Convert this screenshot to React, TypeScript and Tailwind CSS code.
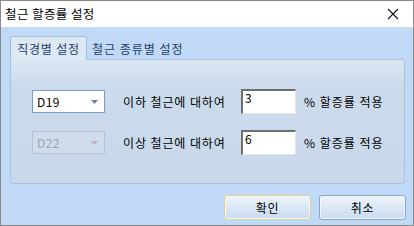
import React from "react";

const font = { fontFamily: '"Noto Sans CJK KR", "Noto Sans", sans-serif' };

function Caret({ color }: { color: string }) {
  return (
    <svg width="7" height="4" viewBox="0 0 7 4">
      <polygon points="0,0 7,0 3.5,4" fill={color} />
    </svg>
  );
}

export default function App() {
  return (
    <div
      className="w-[414px] h-[226px] flex flex-col border border-[#8a8a8a] bg-[#bfd9f6] text-[12px] text-black overflow-hidden"
      style={font}
    >
      <div className="h-[26px] bg-white flex items-center justify-between pl-[4px] pr-[14px] shrink-0">
        <span className="text-[12.5px] leading-none tracking-[0.4px]">철근 할증률 설정</span>
        <svg width="12" height="12" viewBox="0 0 12 12">
          <path d="M1 1 L11 11 M11 1 L1 11" stroke="#111" strokeWidth="1.1" />
        </svg>
      </div>
      <div className="flex-1 flex flex-col px-[9px] pt-[9px]">
        <div className="flex items-end h-[23px]">
          <div className="relative z-10 h-[24px] w-[77px] -mb-[1px] rounded-t-[3px] border border-b-0 border-[#a5bed8] bg-[#dde8f5] flex items-center justify-center text-[#1f3f66] tracking-[0.8px]">
            직경별 설정
          </div>
          <div className="h-[20px] pl-[5px] flex items-center text-[#1f3f66] tracking-[1px]">철근 종류별 설정</div>
        </div>
        <div className="h-[125px] w-[395px] rounded-[3px] border border-[#a9c1dc] bg-gradient-to-b from-[#dbe6f3] via-[#ccdbec] via-[20%] to-[#c8d8ea] flex flex-col pl-[21px] pt-[29px] gap-[16px]">
          <div className="flex items-center h-[25px]">
            <div className="w-[73px] h-[23px] bg-white border border-[#7a9cc8] flex items-center justify-between pl-[4px] pr-[6px]">
              <span className="tracking-[0.4px]">D19</span>
              <Caret color="#6a7fa3" />
            </div>
            <span className="ml-[18px] w-[118px] tracking-[0.9px]">이하 철근에 대하여</span>
            <div className="w-[55px] h-[25px] bg-white border border-[#e6e6e6] border-t-[#6f6f6f] border-l-[#6f6f6f] border-t-2 border-l-2 pl-[2px] leading-[14px]">
              3
            </div>
            <span className="ml-[8px] tracking-[1px]">% 할증률 적용</span>
          </div>
          <div className="flex items-center h-[25px]">
            <div className="w-[73px] h-[23px] bg-[#cfdcec] border border-[#b4c3d4] flex items-center justify-between pl-[4px] pr-[6px] text-[#9aa5b1]">
              <span className="tracking-[0.4px]">D22</span>
              <Caret color="#c8a9c2" />
            </div>
            <span className="ml-[18px] w-[118px] tracking-[0.9px]">이상 철근에 대하여</span>
            <div className="w-[55px] h-[25px] bg-white border border-[#e6e6e6] border-t-[#6f6f6f] border-l-[#6f6f6f] border-t-2 border-l-2 pl-[2px] leading-[14px]">
              6
            </div>
            <span className="ml-[8px] tracking-[1px]">% 할증률 적용</span>
          </div>
        </div>
        <div className="flex justify-end gap-[8px] mt-[11px] mr-[-2px]">
          <div className="w-[87px] h-[25px] rounded-[3px] border border-[#e0d08f] bg-gradient-to-b from-[#eef4fb] via-[#dbe7f5] to-[#c9dbf0] flex items-center justify-center shadow-[inset_0_0_0_1px_#f4f8fd] tracking-[0.8px]">
            확인
          </div>
          <div className="w-[87px] h-[25px] rounded-[3px] border border-[#8ca6c8] bg-gradient-to-b from-[#eef4fb] via-[#dbe7f5] to-[#c9dbf0] flex items-center justify-center shadow-[inset_0_0_0_1px_#f4f8fd] tracking-[0.8px]">
            취소
          </div>
        </div>
      </div>
    </div>
  );
}
